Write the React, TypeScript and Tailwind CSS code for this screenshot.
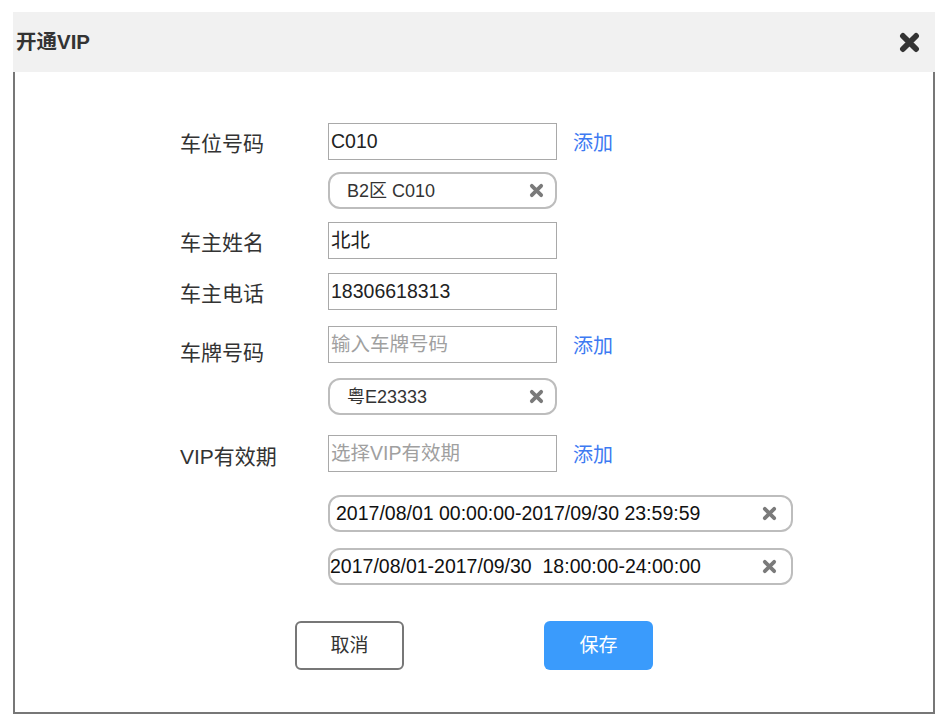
import React from "react";

const font = "font-['Liberation_Sans','Noto_Sans_CJK_SC',sans-serif]";

function CloseIcon({ className, w = 3.6 }: { className?: string; w?: number }) {
  return (
    <svg viewBox="0 0 16 16" className={className}>
      <path d="M3 3 L13 13 M13 3 L3 13" stroke="currentColor" strokeWidth={w} strokeLinecap="round" />
    </svg>
  );
}

function Field({ value, placeholder }: { value?: string; placeholder?: string }) {
  return (
    <div className="w-[229px] h-[37px] border border-[#a9a9a9] flex items-center pl-[2px] text-[19.5px] leading-none">
      {value ? (
        <span className="text-[#222]">{value}</span>
      ) : (
        <span className="text-[#a0a0a0]">{placeholder}</span>
      )}
    </div>
  );
}

function Tag({ text, wide, pad = "pl-[17px]" }: { text: string; wide?: boolean; pad?: string }) {
  return (
    <div
      className={`${wide ? "w-[465px] pr-[14px]" : "w-[229px] pr-[11px]"} h-[37px] border-2 border-[#bdbdbd] rounded-[12px] flex items-center justify-between ${pad}`}
    >
      <span className={`${wide ? "text-[19.5px] text-[#111]" : "text-[18px] text-[#333]"} leading-none whitespace-pre`}>
        {text}
      </span>
      <CloseIcon className="w-[15px] h-[15px] text-[#7a7a7a]" w={4} />
    </div>
  );
}

function Row({
  label,
  children,
  add,
  labelOffset = "",
  className = "",
}: {
  label?: string;
  children: React.ReactNode;
  add?: boolean;
  labelOffset?: string;
  className?: string;
}) {
  return (
    <div className={`flex items-center ${className}`}>
      <div className={`w-[148px] text-[21px] text-[#333] leading-none ${labelOffset}`}>{label}</div>
      {children}
      {add && <span className="ml-[16px] mt-[3px] text-[20px] text-[#3d7af2] leading-none">添加</span>}
    </div>
  );
}

export default function App() {
  return (
    <div className={`w-[948px] h-[725px] bg-white pt-[12px] pl-[13px] ${font}`}>
      <div className="w-[922px]">
        {/* Header */}
        <div className="h-[60px] bg-[#f1f1f1] flex items-center justify-between pl-[3px] pr-[15px]">
          <span className="text-[20.5px] font-bold text-[#333]">开通VIP</span>
          <CloseIcon className="w-[21px] h-[21px] text-[#333]" w={4.4} />
        </div>

        {/* Body */}
        <div className="h-[642px] border-2 border-t-0 border-[#777] pl-[165px] pt-[51px]">
          <Row label="车位号码" add labelOffset="mt-[3px]">
            <Field value="C010" />
          </Row>
          <Row className="mt-[12px]">
            <Tag text="B2区 C010" />
          </Row>
          <Row label="车主姓名" labelOffset="mt-[3px]" className="mt-[13px]">
            <Field value="北北" />
          </Row>
          <Row label="车主电话" labelOffset="mt-[3px]" className="mt-[14px]">
            <Field value="18306618313" />
          </Row>
          <Row label="车牌号码" add labelOffset="mt-[16px]" className="mt-[16px]">
            <Field placeholder="输入车牌号码" />
          </Row>
          <Row className="mt-[15px]">
            <Tag text="粤E23333" />
          </Row>
          <Row label="VIP有效期" add labelOffset="mt-[6px]" className="mt-[20px]">
            <Field placeholder="选择VIP有效期" />
          </Row>
          <Row className="mt-[23px]">
            <Tag wide pad="pl-[6px]" text="2017/08/01 00:00:00-2017/09/30 23:59:59" />
          </Row>
          <Row className="mt-[16px]">
            <Tag wide pad="pl-0" text="2017/08/01-2017/09/30  18:00:00-24:00:00" />
          </Row>

          <div className="flex mt-[36px] pl-[115px]">
            <button className="w-[109px] h-[49px] border-2 border-[#777] rounded-[6px] bg-white text-[19px] text-[#333] pt-[2px]">
              取消
            </button>
            <button className="ml-[140px] w-[109px] h-[49px] rounded-[6px] bg-[#3a9bfc] text-[19px] text-white pt-[2px]">
              保存
            </button>
          </div>
        </div>
      </div>
    </div>
  );
}
